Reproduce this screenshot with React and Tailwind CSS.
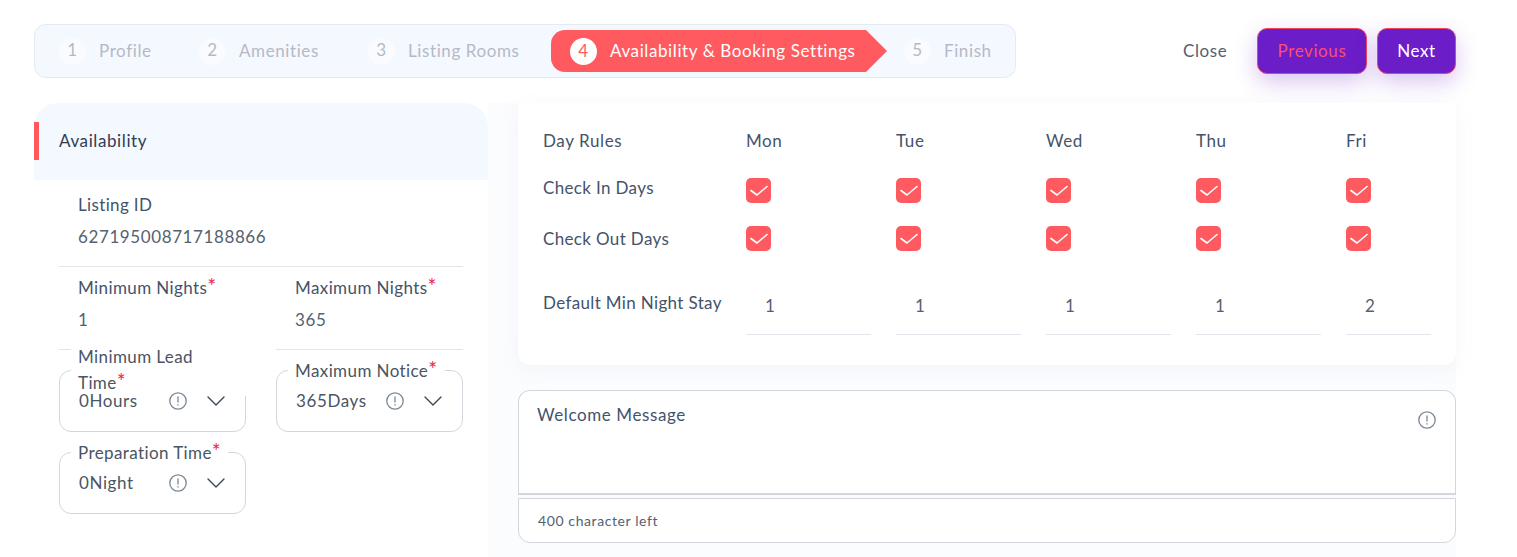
import { ChevronDown } from 'lucide-react'

const steps = [
  { n: 1, label: 'Profile', width: 'w-[140px]' },
  { n: 2, label: 'Amenities', width: 'w-[169px]' },
  { n: 3, label: 'Listing Rooms', width: 'w-[183px]' },
]
const days = ['Mon', 'Tue', 'Wed', 'Thu', 'Fri']
const minStay = [1, 1, 1, 1, 2]

function InfoIcon({ className }) {
  return (
    <svg className={className} viewBox="0 0 18 18" fill="none" stroke="#7b8794" strokeWidth="1.3" aria-hidden>
      <circle cx="9" cy="9" r="8.2" />
      <path d="M9 5v5" strokeLinecap="round" />
      <path d="M9 12.6v.4" strokeLinecap="round" />
    </svg>
  )
}

function Check() {
  return (
    <div className="flex h-[25px] w-[25px] items-center justify-center rounded-[5px] bg-[#ff5a5f]">
      <svg className="h-[25px] w-[25px]" viewBox="0 0 25 25" fill="none" stroke="white" strokeWidth="1.6" aria-hidden>
        <path d="M5 12.5l6 4.5 10-8.5" strokeLinecap="round" strokeLinejoin="round" />
      </svg>
    </div>
  )
}

function Star() {
  return <span className="relative top-[0px] text-[21px] leading-[0] text-[#f0264f]">*</span>
}

function Step({ n, label, width }) {
  return (
    <div className={`flex items-center gap-[13px] ${width}`}>
      <span className="flex h-[27px] w-[27px] items-center justify-center rounded-full bg-[#f9fbff] pb-[2px] text-[#b4bac5]">{n}</span>
      <span className="text-[#b4bac5]">{label}</span>
    </div>
  )
}

function SelectBox({ value, label }) {
  return (
    <div className="relative flex h-[62px] w-[187px] items-center rounded-[12px] border border-[#d3d6dc] pl-[19px] text-[#4a5563]">
      {label}
      <span className="relative w-[90px]">{value}</span>
      <InfoIcon className="relative h-[18px] w-[18px]" />
      <ChevronDown className="relative ml-[13px] h-[32px] w-[32px] text-[#3c4654]" strokeWidth={1} />
    </div>
  )
}

export default function App() {
  return (
    <div className="flex h-[557px] flex-col overflow-hidden bg-white pl-[34px] pt-[24px] font-['Lato','Noto_Sans',sans-serif] text-[17px] leading-[26px] tracking-[0.6px] text-[#44536a]">
      <header className="flex items-center">
        <div className="flex h-[54px] w-[982px] items-center rounded-[12px] border border-[#e4eaf4] bg-[#f4f8ff] pl-[24px]">
          {steps.map((s) => (
            <Step key={s.n} {...s} />
          ))}
          <div className="flex h-[42px] w-[336px] items-center gap-[13px] rounded-l-[14px] bg-[#ff5a5f] pl-[19px] text-white [clip-path:polygon(0_0,calc(100%-21px)_0,100%_50%,calc(100%-21px)_100%,0_100%)]">
            <span className="flex h-[27px] w-[27px] items-center justify-center rounded-full bg-white pb-[1px] text-[#ff5a5f]">4</span>
            <span className="whitespace-nowrap">Availability &amp; Booking Settings</span>
          </div>
          <div className="ml-[17px]">
            <Step n={5} label="Finish" width="w-[90px]" />
          </div>
        </div>
        <button type="button" className="ml-[167px] w-[44px] whitespace-nowrap text-[#56616f]">Close</button>
        <button type="button" className="ml-[30px] h-[46px] w-[110px] rounded-[10px] border border-[#f0455f] bg-[#6b1dc7] text-[#ff4d6a] shadow-[0_8px_22px_rgba(107,29,199,0.25)]">Previous</button>
        <button type="button" className="ml-[10px] h-[46px] w-[79px] rounded-[10px] border border-[#f0455f] bg-[#6b1dc7] text-white shadow-[0_8px_22px_rgba(107,29,199,0.25)]">Next</button>
      </header>

      <div className="mt-[25px] flex flex-1">
        <aside className="w-[454px] shrink-0">
          <div className="flex h-[77px] items-center rounded-t-[24px] bg-[#f4f8ff] pb-[2px]">
            <div className="h-[38px] w-[5px] bg-[#ff5a5f]" />
            <span className="ml-[20px] text-[#2f3d52]">Availability</span>
          </div>
          <div className="mx-[25px]">
            <div className="h-[87px] border-b border-[#e2e6ec] pl-[19px] pt-[12px]">
              <div className="tracking-[0.35px]">Listing ID</div>
              <div className="mt-[6px] text-[#56616f]">627195008717188866</div>
            </div>
            <div className="grid grid-cols-[187px_187px] gap-x-[30px]">
              <div className="h-[83px] border-b border-[#e2e6ec] pl-[19px] pt-[8px]">
                <div className="tracking-[0.4px]">Minimum Nights<Star /></div>
                <div className="mt-[6px] text-[#56616f]">1</div>
              </div>
              <div className="h-[83px] border-b border-[#e2e6ec] pl-[19px] pt-[8px]">
                <div className="tracking-[0.4px]">Maximum Nights<Star /></div>
                <div className="mt-[6px] text-[#56616f]">365</div>
              </div>
              <div className="mt-[20px]">
                <SelectBox
                  value="0Hours"
                  label={
                    <span className="absolute left-[11px] right-[-1px] top-[-27px] bg-white px-[7px] tracking-[0.4px]">
                      Minimum Lead<br />Time<Star />
                    </span>
                  }
                />
              </div>
              <div className="mt-[20px]">
                <SelectBox
                  value="365Days"
                  label={
                    <span className="absolute left-[11px] top-[-13px] bg-white px-[7px] tracking-[0.4px]">
                      Maximum Notice<Star />
                    </span>
                  }
                />
              </div>
              <div className="mt-[20px]">
                <SelectBox
                  value="0Night"
                  label={
                    <span className="absolute left-[11px] top-[-13px] bg-white px-[7px] tracking-[0.4px]">
                      Preparation Time<Star />
                    </span>
                  }
                />
              </div>
            </div>
          </div>
        </aside>

        <div className="w-[30px] shrink-0 bg-[#fbfcfe]" />

        <main className="w-[938px] shrink-0 bg-[#fbfcfe]">
          <section className="h-[262px] rounded-b-[12px] bg-white pl-[25px] pt-[25px] shadow-[0_4px_20px_rgba(120,140,180,0.07)]">
            <div className="grid grid-cols-[203px_150px_150px_150px_150px_150px]">
              <div>Day Rules</div>
              {days.map((d) => (
                <div key={d}>{d}</div>
              ))}
              <div className="mt-[21px] tracking-[0.35px]">Check In Days</div>
              {days.map((d) => (
                <div key={d} className="mt-[24px]"><Check /></div>
              ))}
              <div className="mt-[23px] tracking-[0.35px]">Check Out Days</div>
              {days.map((d) => (
                <div key={d} className="mt-[23px]"><Check /></div>
              ))}
              <div className="mt-[38px] whitespace-nowrap tracking-[0.35px]">Default Min Night Stay</div>
              {minStay.map((v, i) => (
                <div key={i} className={`mt-[21px] h-[62px] border-b border-[#e2e6ec] pl-[19px] pt-[20px] text-[#56616f] ${i === 4 ? 'w-[85px]' : 'w-[125px]'}`}>{v}</div>
              ))}
            </div>
          </section>

          <section className="mt-[25px]">
            <div className="relative h-[105px] rounded-t-[12px] border border-b-2 border-[#d3d6dc] bg-white pl-[18px] pt-[11px]">
              Welcome Message
              <InfoIcon className="absolute right-[19px] top-[20px] h-[18px] w-[18px]" />
            </div>
            <div className="mt-[3px] flex h-[45px] items-center rounded-b-[12px] border border-[#d3d6dc] bg-white pl-[19px] text-[14px] tracking-[0.6px] text-[#56616f]">
              400 character left
            </div>
          </section>
        </main>
      </div>
    </div>
  )
}
